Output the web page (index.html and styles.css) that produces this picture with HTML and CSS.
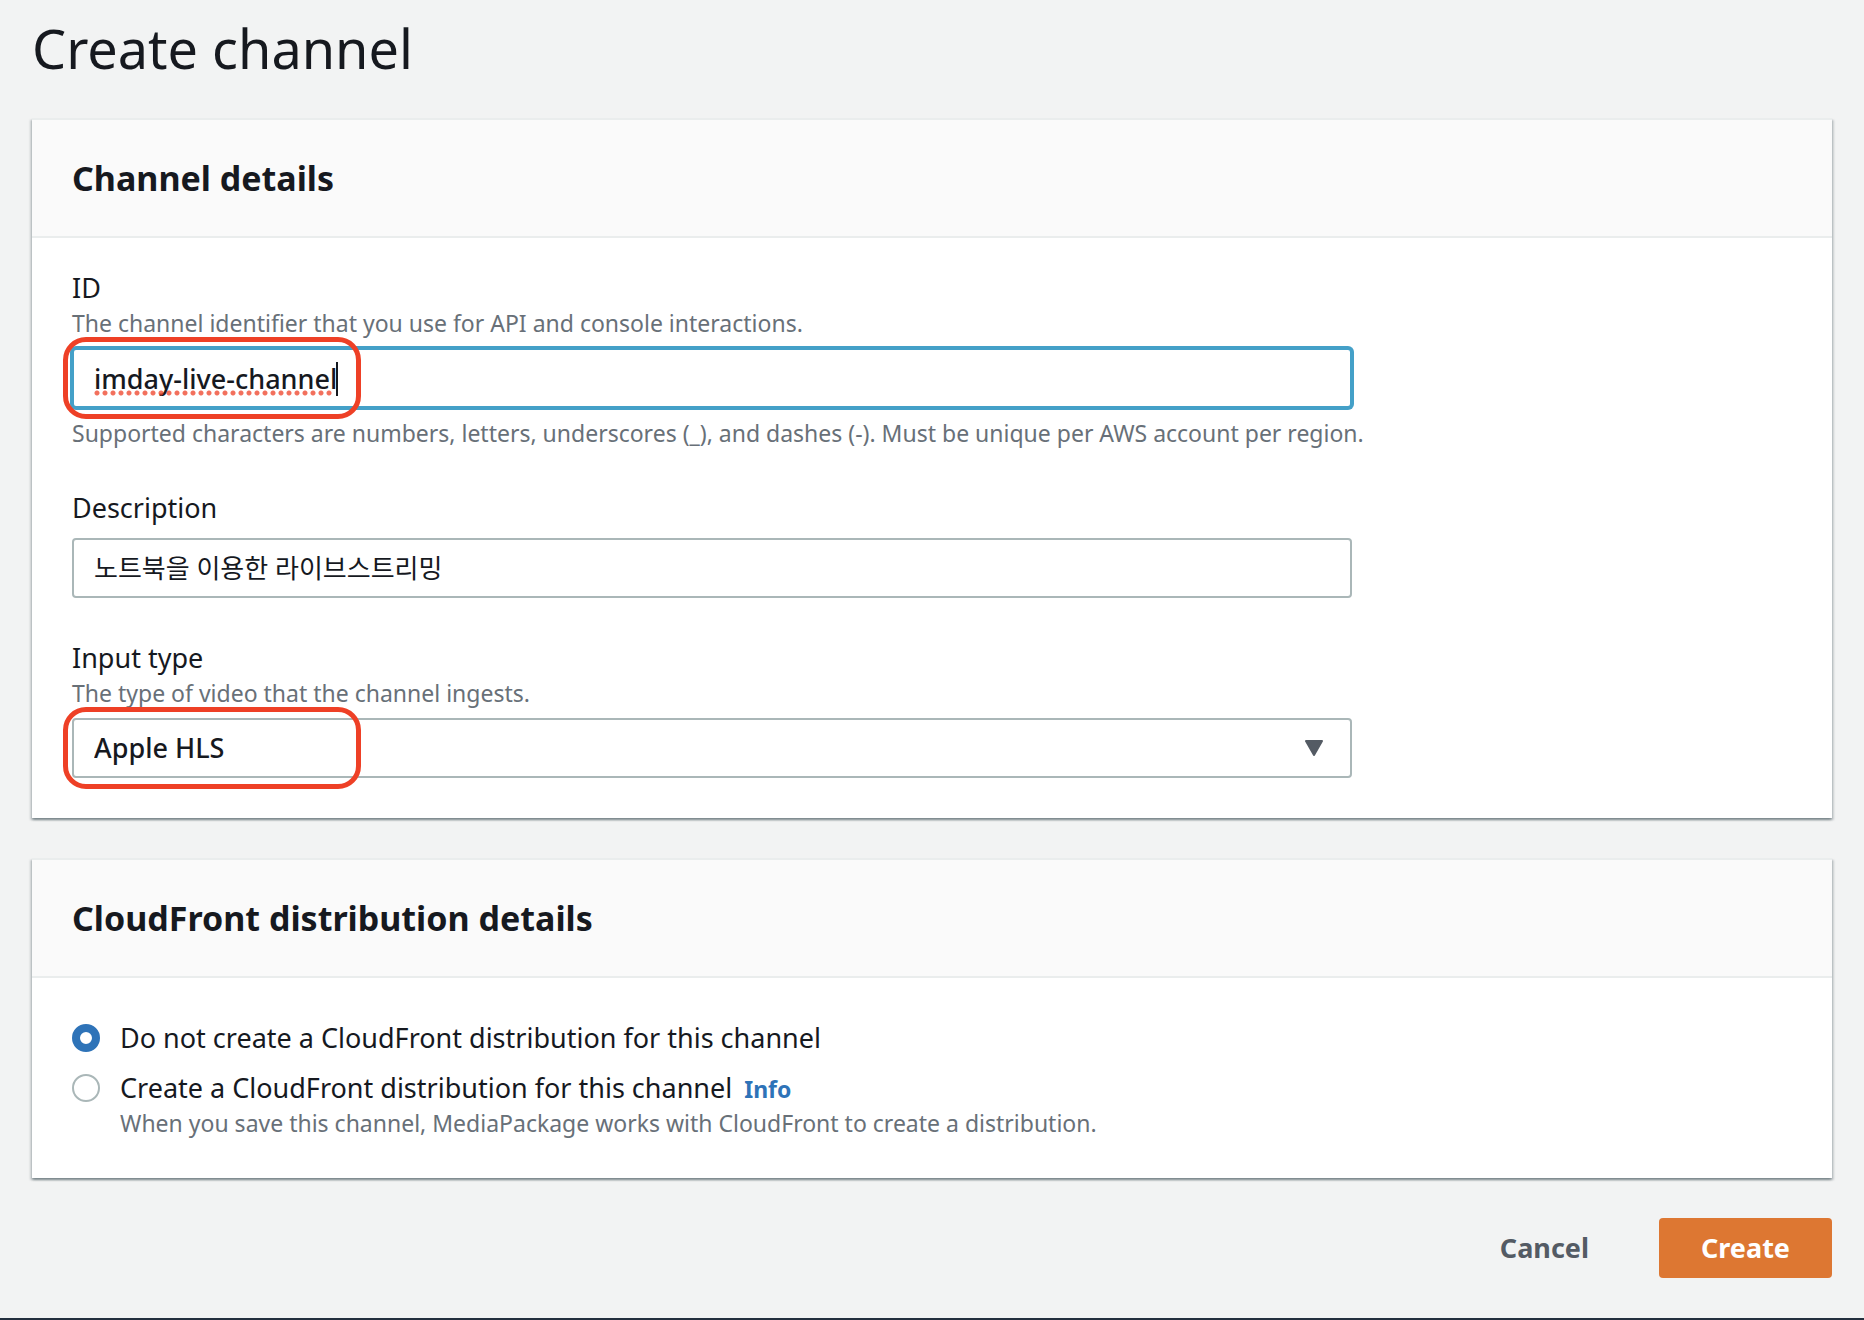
FILE: index.html
```html
<!DOCTYPE html>
<html lang="en">
<head>
<meta charset="utf-8">
<title>Create channel</title>
<link rel="stylesheet" href="styles.css">
</head>
<body>
<main class="page">
  <h1 class="page-title">Create channel</h1>
  <form class="form">
    <section class="card">
      <header class="card-header"><h2 class="card-title">Channel details</h2></header>
      <div class="card-body fields">
        <div class="field">
          <label class="label" for="channel-id">ID</label>
          <p class="hint" id="id-hint">The channel identifier that you use for API and console interactions.</p>
          <div class="control">
            <input class="input input-focused" id="channel-id" type="text" value="imday-live-channel" spellcheck="false" aria-describedby="id-hint id-rules">
            <span class="spelling"></span>
            <span class="caret"></span>
            <span class="marker"></span>
          </div>
          <p class="hint hint-below" id="id-rules">Supported characters are numbers, letters, underscores (_), and dashes (-). Must be unique per AWS account per region.</p>
        </div>
        <div class="field">
          <label class="label" for="description">Description</label>
          <div class="control">
            <input class="input input-korean" id="description" type="text" value="노트북을 이용한 라이브스트리밍" lang="ko" spellcheck="false">
          </div>
        </div>
        <div class="field">
          <label class="label" for="input-type">Input type</label>
          <p class="hint" id="type-hint">The type of video that the channel ingests.</p>
          <div class="control">
            <select class="input select" id="input-type" aria-describedby="type-hint">
              <option>Apple HLS</option>
            </select>
            <svg class="arrow" viewBox="0 0 20 16" aria-hidden="true"><path d="M2 1H18L10 15Z"/></svg>
            <span class="marker"></span>
          </div>
        </div>
      </div>
    </section>
    <section class="card">
      <header class="card-header"><h2 class="card-title">CloudFront distribution details</h2></header>
      <div class="card-body options">
        <div class="option">
          <input class="radio" type="radio" name="distribution" id="dist-none" checked>
          <label class="label" for="dist-none">Do not create a CloudFront distribution for this channel</label>
        </div>
        <div class="option">
          <input class="radio" type="radio" name="distribution" id="dist-create" aria-describedby="dist-hint">
          <div class="option-text">
            <div class="option-line">
              <label class="label" for="dist-create">Create a CloudFront distribution for this channel</label>
              <a class="info" href="#info">Info</a>
            </div>
            <p class="hint" id="dist-hint">When you save this channel, MediaPackage works with CloudFront to create a distribution.</p>
          </div>
        </div>
      </div>
    </section>
    <div class="actions">
      <button class="button" type="button">Cancel</button>
      <button class="button button-primary" type="submit">Create</button>
    </div>
  </form>
</main>
</body>
</html>
```

FILE: styles.css
```css
* {
  box-sizing: border-box;
}

body {
  margin: 0;
  background: #f2f3f3;
  color: #16191f;
  font-family: "Noto Sans", "Noto Sans CJK KR", sans-serif;
  font-size: 27px;
  font-weight: 430;
}

h1, h2, p {
  margin: 0;
}

.page {
  padding: 8px 32px 40px;
  border-bottom: 2px solid #232f3e;
}

.page-title {
  margin-bottom: 30px;
  font-size: 54px;
  font-weight: 400;
  line-height: 80px;
}

.form {
  display: flex;
  flex-direction: column;
  gap: 40px;
}

.card {
  border-top: 2px solid #eaeded;
  background: #fff;
  box-shadow: 0 2px 2px rgba(0, 28, 36, 0.3), 2px 2px 2px rgba(0, 28, 36, 0.15), -2px 2px 2px rgba(0, 28, 36, 0.15);
}

.card-header {
  padding: 36px 40px;
  border-bottom: 2px solid #eaeded;
  background: #fafafa;
}

.card-title {
  font-size: 34px;
  font-weight: 700;
  line-height: 44px;
}

.card-body {
  display: flex;
  flex-direction: column;
  padding: 30px 40px 40px;
}

.fields {
  gap: 40px;
}

.field {
  display: flex;
  flex-direction: column;
}

.label {
  line-height: 40px;
}

.hint {
  color: #687078;
  font-size: 23px;
  line-height: 30px;
}

.hint-below {
  margin-top: 10px;
}

.control {
  position: relative;
  max-width: 1280px;
  margin-top: 10px;
}

.input {
  display: block;
  width: 100%;
  height: 60px;
  padding: 0 20px;
  border: 2px solid #aab7b8;
  border-radius: 4px;
  background: #fff;
  color: inherit;
  font: inherit;
  font-weight: 500;
  outline: none;
}

.input-focused {
  border-color: #44a0c8;
  box-shadow: 0 0 0 2px #44a0c8;
}

.input-korean {
  padding-bottom: 2px;
  font-size: 26px;
  font-weight: 400;
}

.select {
  padding-bottom: 2px;
  appearance: none;
}

.arrow {
  position: absolute;
  top: 22px;
  right: 28px;
  width: 20px;
  height: 16px;
  fill: #545b64;
  stroke: #545b64;
  stroke-width: 2;
  stroke-linejoin: round;
}

.spelling {
  position: absolute;
  top: 42px;
  left: 22px;
  width: 240px;
  height: 6px;
  background: radial-gradient(circle at 3px 3px, rgba(238, 64, 38, 0.75) 2px, transparent 3px) 0 0 / 8px 6px repeat-x;
}

.caret {
  position: absolute;
  top: 14px;
  left: 264px;
  width: 2px;
  height: 34px;
  background: #16191f;
}

.marker {
  position: absolute;
  top: -11px;
  left: -9px;
  width: 298px;
  height: 82px;
  border: 5px solid #ee4026;
  border-radius: 23px;
  pointer-events: none;
}

.options {
  gap: 10px;
  padding-top: 40px;
}

.option {
  display: flex;
  gap: 20px;
}

.option-line {
  display: flex;
  align-items: baseline;
  gap: 12px;
}

.radio {
  flex: none;
  width: 28px;
  height: 28px;
  margin: 6px 0;
  border: 2px solid #aab7b8;
  border-radius: 50%;
  background: #fff;
  appearance: none;
}

.radio:checked {
  border: 8px solid #2e73b8;
}

.info {
  color: #2e73b8;
  font-size: 23px;
  font-weight: 700;
  line-height: 30px;
  text-decoration: none;
}

.actions {
  display: flex;
  justify-content: flex-end;
  gap: 28px;
}

.button {
  height: 60px;
  padding: 0 42px 2px;
  border: 0;
  border-radius: 4px;
  background: transparent;
  color: #545b64;
  font: inherit;
  font-weight: 700;
}

.button-primary {
  background: #dd7732;
  color: #fff;
}
```
